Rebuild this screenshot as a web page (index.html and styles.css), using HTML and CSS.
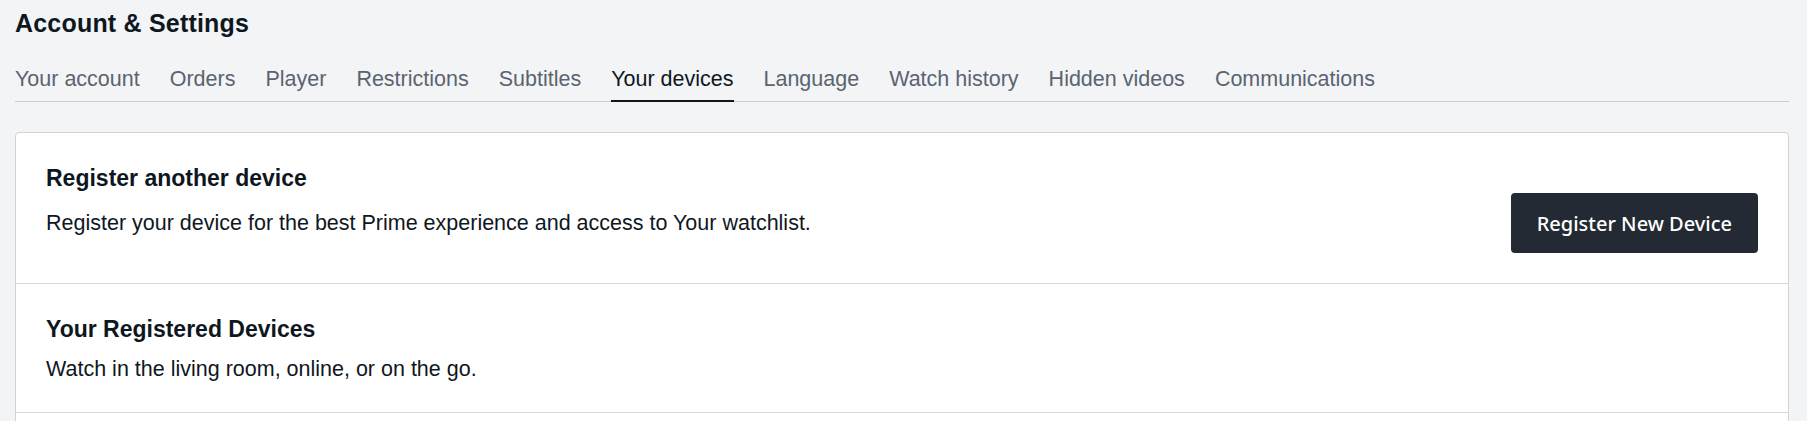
FILE: index.html
```html
<!DOCTYPE html>
<html lang="en">
<head>
    <meta charset="UTF-8">
    <meta name="viewport" content="width=device-width, initial-scale=1.0">
    <title>Account &amp; Settings</title>
    <link rel="stylesheet" href="styles.css">
</head>
<body>
    <div class="page">
        <h1>Account &amp; Settings</h1>

        <!-- Settings tabs -->
        <nav class="tabs">
            <a href="#">Your account</a>
            <a href="#">Orders</a>
            <a href="#">Player</a>
            <a href="#">Restrictions</a>
            <a href="#">Subtitles</a>
            <a href="#" class="active">Your devices</a>
            <a href="#">Language</a>
            <a href="#">Watch history</a>
            <a href="#">Hidden videos</a>
            <a href="#">Communications</a>
        </nav>

        <!-- Devices card -->
        <div class="card">
            <div class="section">
                <h2>Register another device</h2>
                <div class="section-row">
                    <p>Register your device for the best Prime experience and access to Your watchlist.</p>
                    <button class="btn-dark">Register New Device</button>
                </div>
            </div>

            <div class="section compact">
                <h2>Your Registered Devices</h2>
                <p class="sub">Watch in the living room, online, or on the go.</p>
            </div>

            <div class="section device-list"></div>
        </div>
    </div>
</body>
</html>
```

FILE: styles.css
```css
body {
    margin: 0;
    padding: 0;
    background-color: #f2f4f6;
    font-family: "Liberation Sans", Arial, sans-serif;
    color: #0f171e;
}

.page {
    padding: 7px 18px 0 15px;
}

h1 {
    margin: 0;
    font-size: 25px;
    line-height: 32px;
    font-weight: bold;
    letter-spacing: 0.2px;
}

.tabs {
    display: flex;
    gap: 30px;
    margin-top: 25px;
    border-bottom: 1px solid #c8cdd2;
}

.tabs a {
    display: block;
    padding-bottom: 6px;
    border-bottom: 2px solid transparent;
    margin-bottom: -1px;
    font-size: 21.5px;
    line-height: 30px;
    color: #5a6470;
    text-decoration: none;
}

.tabs a.active {
    color: #0f171e;
    border-bottom-color: #0f171e;
}

.card {
    margin-top: 30px;
    background: #fff;
    border: 1px solid #d0d4d8;
    border-radius: 4px;
}

.section {
    padding: 30px;
    border-bottom: 1px solid #d5d9dd;
}

.section h2 {
    margin: 0;
    font-size: 23px;
    line-height: 30px;
    font-weight: bold;
}

.section p {
    margin: 0;
    font-size: 21.5px;
    line-height: 30px;
}

.section-row {
    display: flex;
    justify-content: space-between;
    align-items: center;
}

.section .sub {
    margin-top: 10px;
}

.section.compact {
    padding-bottom: 28px;
}

.btn-dark {
    height: 60px;
    padding: 0 26px;
    background-color: #232a33;
    color: #fff;
    border: none;
    border-radius: 4px;
    font-family: "Noto Sans", "Liberation Sans", sans-serif;
    font-size: 20px;
    font-weight: 500;
    cursor: pointer;
}

.device-list {
    min-height: 120px;
    border-bottom: none;
}
```
